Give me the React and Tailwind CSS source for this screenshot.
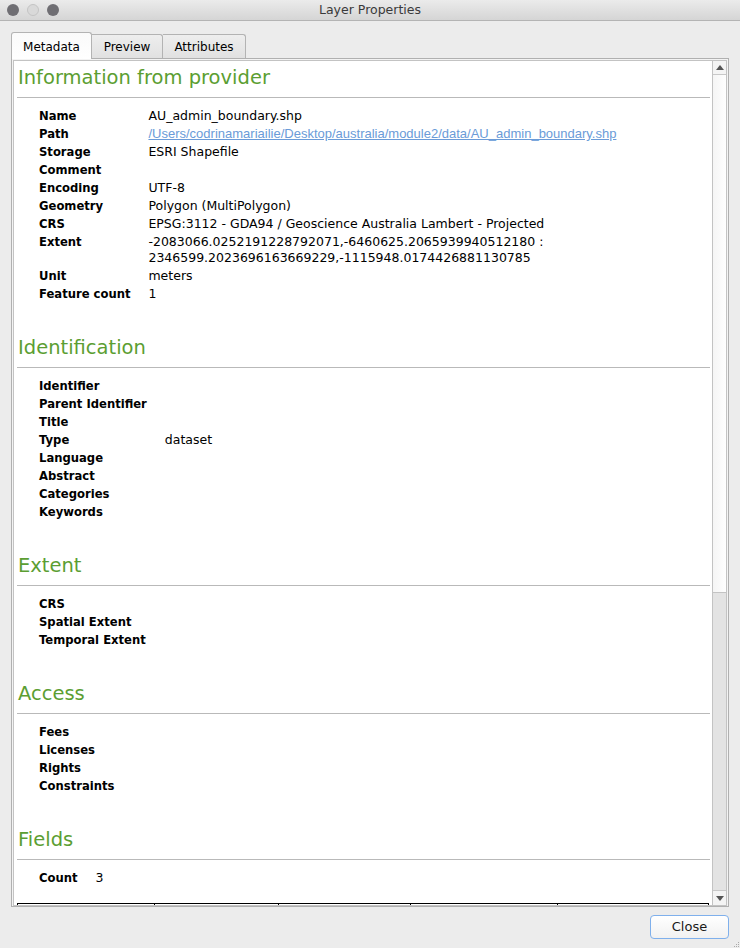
import React from "react";

const G = "text-[#5b9e32]";

function Heading({ children, first }) {
  return (
    <div className={first ? "pt-[4px]" : "pt-[32px]"}>
      <div className={`pl-[1px] text-[19.5px] leading-[26px] ${G}`}>{children}</div>
      <div className="mt-[6px] h-px bg-[#b9b9b9] mr-[2px]" />
    </div>
  );
}

function Rows({ rows }) {
  return (
    <table className="mt-[9px] ml-[22px] border-collapse">
      <tbody>
        {rows.map(([k, v], i) => (
          <tr key={i} className="align-top">
            <td className="font-bold text-[11.6px] pr-[18px] py-[1px] leading-[16px] whitespace-nowrap">{k}</td>
            <td className="py-[1px] leading-[16px] whitespace-nowrap">{v}</td>
          </tr>
        ))}
      </tbody>
    </table>
  );
}

export default function App() {
  return (
    <div className="w-[740px] h-[948px] bg-[#ececec] overflow-hidden relative font-['DejaVu_Sans',sans-serif] text-black">
      {/* title bar */}
      <div className="h-[21px] bg-gradient-to-b from-[#ebebeb] to-[#d5d5d5] border-b border-[#b4b4b4] flex items-center relative">
        <div className="flex items-center gap-[8px] pl-[7px]">
          <div className="w-[12px] h-[12px] rounded-full bg-[#6f6e73]" />
          <div className="w-[12px] h-[12px] rounded-full bg-[#d9d9d9] border border-[#c4c4c4]" />
          <div className="w-[12px] h-[12px] rounded-full bg-[#6f6e73]" />
        </div>
        <div className="absolute inset-0 flex items-center justify-center text-[12.5px] text-[#3a3a3a]">Layer Properties</div>
      </div>

      {/* tabs */}
      <div className="pt-[11px] pl-[11px] flex items-end h-[37px]">
        <div className="relative z-10 -mb-px w-[81px] h-[27px] bg-gradient-to-b from-[#fafafa] to-[#ffffff] border border-[#b3b3b3] border-b-0 rounded-t-[3px] flex items-center justify-center text-[12px] pt-[1px]">
          Metadata
        </div>
        <div className="w-[71px] h-[24px] bg-gradient-to-b from-[#eeeeee] to-[#e1e1e1] border border-[#b3b3b3] border-l-0 border-b-0 rounded-tr-[3px] flex items-center justify-center text-[12px] pt-[1px]">
          Preview
        </div>
        <div className="w-[83px] h-[24px] bg-gradient-to-b from-[#eeeeee] to-[#e1e1e1] border border-[#b3b3b3] border-l-0 border-b-0 rounded-tr-[3px] flex items-center justify-center text-[12px] pt-[1px]">
          Attributes
        </div>
      </div>

      {/* frame */}
      <div className="ml-[11px] w-[718px] h-[849px] border border-[#b0b0b0] bg-[#f3f3f3] p-px pb-0">
        <div className="h-full border border-[#c3c3c3] bg-white flex">
          {/* content */}
          <div className="flex-1 overflow-hidden pl-[3px] text-[12.5px]">
            <Heading first>Information from provider</Heading>
            <Rows
              rows={[
                ["Name", "AU_admin_boundary.shp"],
                [
                  "Path",
                  <span className="font-['Liberation_Sans',sans-serif] text-[13px] text-[#6a9bd8] underline">
                    /Users/codrinamariailie/Desktop/australia/module2/data/AU_admin_boundary.shp
                  </span>,
                ],
                ["Storage", "ESRI Shapefile"],
                ["Comment", ""],
                ["Encoding", "UTF-8"],
                ["Geometry", "Polygon (MultiPolygon)"],
                ["CRS", "EPSG:3112 - GDA94 / Geoscience Australia Lambert - Projected"],
                [
                  "Extent",
                  <span>
                    -2083066.0252191228792071,-6460625.2065939940512180 :
                    <br />
                    2346599.2023696163669229,-1115948.0174426881130785
                  </span>,
                ],
                ["Unit", "meters"],
                ["Feature count", "1"],
              ]}
            />

            <Heading>Identification</Heading>
            <Rows
              rows={[
                ["Identifier", ""],
                ["Parent Identifier", ""],
                ["Title", ""],
                ["Type", "dataset"],
                ["Language", ""],
                ["Abstract", ""],
                ["Categories", ""],
                ["Keywords", ""],
              ]}
            />

            <Heading>Extent</Heading>
            <Rows rows={[["CRS", ""], ["Spatial Extent", ""], ["Temporal Extent", ""]]} />

            <Heading>Access</Heading>
            <Rows rows={[["Fees", ""], ["Licenses", ""], ["Rights", ""], ["Constraints", ""]]} />

            <Heading>Fields</Heading>
            <Rows rows={[["Count", "3"]]} />

            <div className="mt-[16px] mr-[3px] grid grid-cols-[137px_124px_132px_147px_1fr] border-t border-l border-r border-black h-[20px]">
              <div className="border-r border-black" />
              <div className="border-r border-black" />
              <div className="border-r border-black" />
              <div className="border-r border-black" />
              <div />
            </div>
          </div>

          {/* scrollbar */}
          <div className="w-[14px] border-l border-[#c3c3c3] flex flex-col bg-[#e3e3e3]">
            <div className="h-[14px] bg-[#f4f4f4] border-b border-[#c8c8c8] flex items-center justify-center">
              <svg width="8" height="5" viewBox="0 0 8 5"><path d="M4 0 L8 5 L0 5 Z" fill="#555" /></svg>
            </div>
            <div className="h-[518px] bg-gradient-to-r from-[#f5f5f5] to-[#fefefe] border-b border-[#c3c3c3]" />
            <div className="flex-1" />
            <div className="h-[15px] bg-[#f4f4f4] border-t border-[#c8c8c8] flex items-center justify-center">
              <svg width="8" height="5" viewBox="0 0 8 5"><path d="M0 0 L8 0 L4 5 Z" fill="#555" /></svg>
            </div>
          </div>
        </div>
      </div>

      {/* bottom */}
      <div className="flex justify-end pr-[11px] pt-[8px]">
        <button className="w-[79px] h-[24px] rounded-[4px] border border-[#7fb0ec] bg-gradient-to-b from-[#ffffff] to-[#f1f1f1] text-[13px] font-['DejaVu_Sans',sans-serif] text-[#1a1a1a] flex items-center justify-center">
          Close
        </button>
      </div>
      <div className="absolute right-[1px] bottom-[1px] grid grid-cols-3 gap-[1px]">
        <div className="w-px h-px" /><div className="w-px h-px" /><div className="w-px h-px bg-[#aaa]" />
        <div className="w-px h-px" /><div className="w-px h-px bg-[#aaa]" /><div className="w-px h-px bg-[#aaa]" />
        <div className="w-px h-px bg-[#aaa]" /><div className="w-px h-px bg-[#aaa]" /><div className="w-px h-px bg-[#aaa]" />
      </div>
    </div>
  );
}
